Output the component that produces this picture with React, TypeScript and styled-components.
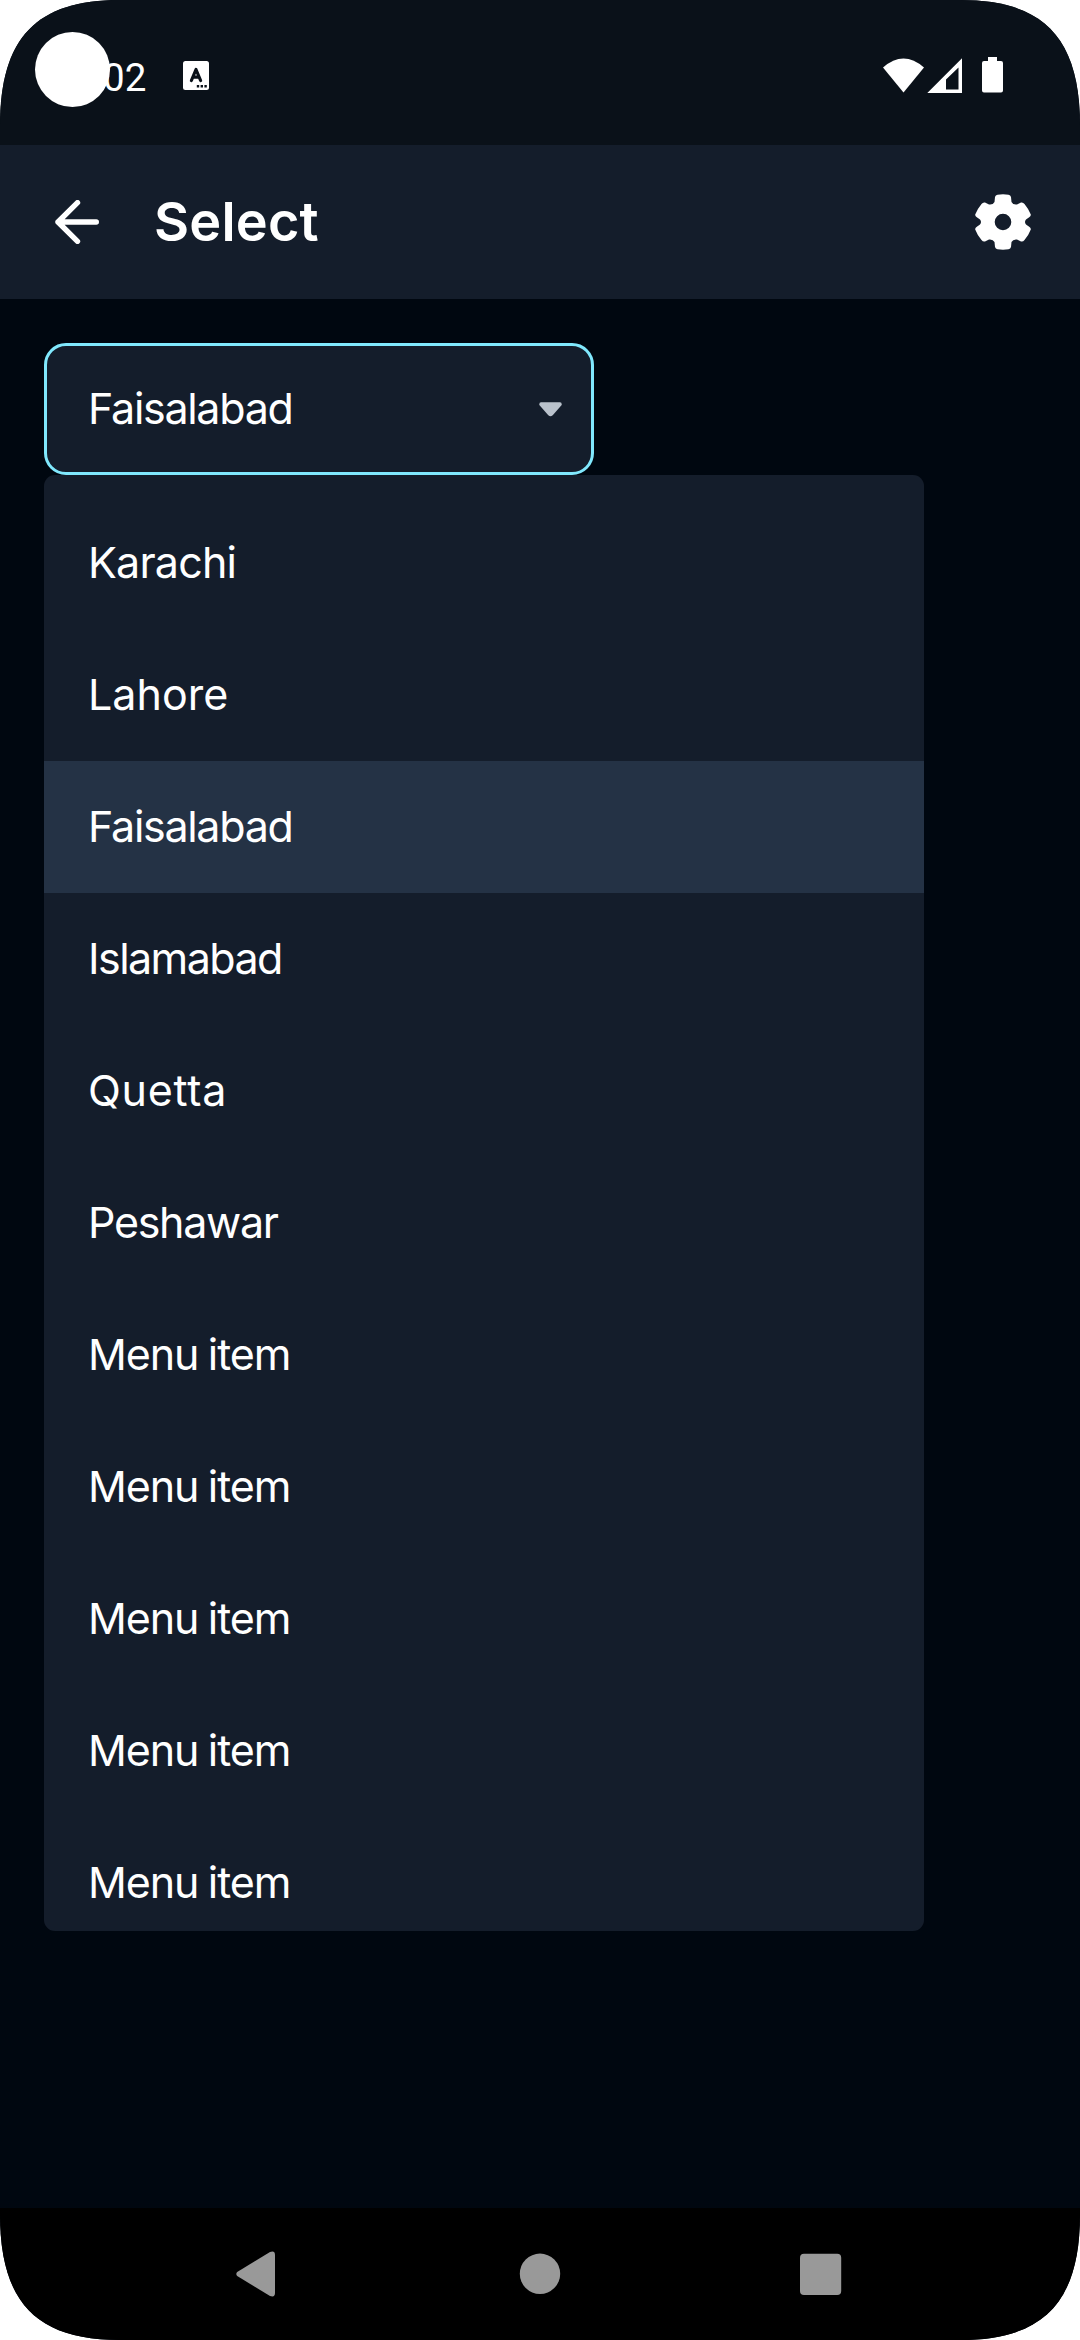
import React from "react";
import styled, { createGlobalStyle } from "styled-components";

const GlobalStyle = createGlobalStyle`
  html, body { margin: 0; padding: 0; background: #fff; }
  * { box-sizing: border-box; }
`;

const Screen = styled.div`
  position: relative;
  display: flex;
  flex-direction: column;
  width: 1080px;
  height: 2340px;
  overflow: hidden;
  background: #000710;
  color: #fff;
  font-family: Inter, "Liberation Sans", sans-serif;
  clip-path: path("M0 126 C0 37 37 0 120 0 H960 C1043 0 1080 37 1080 126 V2214 C1080 2303 1043 2340 960 2340 H120 C37 2340 0 2303 0 2214 Z");
`;

const StatusBar = styled.header`
  display: flex;
  justify-content: space-between;
  height: 145px;
  padding: 55px 76px 0 103px;
  background: #0a1119;
`;

const StatusGroup = styled.div`
  display: flex;
  align-items: flex-start;
`;

const Clock = styled.span`
  width: 80px;
  font-family: Roboto, sans-serif;
  font-size: 38.5px;
  line-height: 46px;
`;

const KeyboardBadge = styled.svg`
  margin-top: 6px;
`;

const SystemIcons = styled.svg`
  margin-top: 2px;
`;

const CameraHole = styled.div`
  position: absolute;
  left: 35px;
  top: 32px;
  width: 75px;
  height: 75px;
  border-radius: 50%;
  background: #fff;
`;

const AppBar = styled.div`
  display: flex;
  align-items: center;
  height: 154px;
  padding: 0 49px 0 55px;
  background: #141d2b;
`;

const Title = styled.h1`
  flex: 1;
  margin: 0 0 0 55px;
  font-size: 54px;
  line-height: 64px;
  font-weight: 600;
  letter-spacing: 0.2px;
`;

const Content = styled.main`
  flex: 1;
  padding: 44px;
`;

const SelectField = styled.div`
  display: flex;
  align-items: center;
  justify-content: space-between;
  width: 550px;
  height: 132px;
  padding: 0 29px 0 41px;
  border: 3px solid #80e8fd;
  border-radius: 22px;
  background: #141d2b;
`;

const Label = styled.span<{ $spacing: number }>`
  padding-bottom: 2px;
  font-size: 43px;
  line-height: 52px;
  letter-spacing: ${(p) => p.$spacing}px;
  word-spacing: -1.5px;
  white-space: nowrap;
`;

const Menu = styled.ul`
  width: 880px;
  height: 1456px;
  margin: 0;
  padding: 22px 0 0;
  list-style: none;
  overflow: hidden;
  border-radius: 11px;
  background: #141d2b;
`;

const MenuItem = styled.li<{ $selected: boolean }>`
  display: flex;
  align-items: center;
  height: 132px;
  padding: 0 44px;
  background: ${(p) => (p.$selected ? "#243245" : "transparent")};
`;

const NavBar = styled.nav`
  display: flex;
  align-items: center;
  justify-content: space-between;
  height: 132px;
  padding: 0 238px 0 236px;
  background: #000;
`;

const HomeIcon = styled.svg`
  margin-left: 5px;
`;

const cities: [string, number][] = [
  ["Karachi", -0.8],
  ["Lahore", 0],
  ["Faisalabad", -1.3],
  ["Islamabad", -1.55],
  ["Quetta", 0.7],
  ["Peshawar", -1.3],
  ["Menu item", -1.1],
  ["Menu item", -1.1],
  ["Menu item", -1.1],
  ["Menu item", -1.1],
  ["Menu item", -1.1],
];

export default function App() {
  return (
    <>
      <GlobalStyle />
      <Screen>
        <StatusBar>
          <StatusGroup>
            <Clock>02</Clock>
            <KeyboardBadge width="26" height="30" viewBox="0 0 26 30">
              <rect width="26" height="29" rx="2.5" fill="#fff" />
              <path d="M8.4 19.5 L13 8.5 L17.6 19.5 M10 16.2 H16" fill="none" stroke="#0a1119" strokeWidth="3.2" strokeLinecap="round" strokeLinejoin="round" />
              <path d="M13.8 24h2.4v2.4h-2.4zM17.6 24h2.4v2.4h-2.4zM21.4 24h2.4v2.4h-2.4z" fill="#0a1119" />
            </KeyboardBadge>
          </StatusGroup>
          <SystemIcons width="121" height="37" viewBox="883 57 121 37" fill="#fff">
            <path d="M883 67.5 Q903.5 49.5 924 67.5 L903.5 92.5 Z" />
            <path fillRule="evenodd" d="M927.3 93 L962 58.3 V93 Z M946 89.5 H958.5 V67.5 L946 79.5 Z" />
            <path d="M988 57 h9 v4 h4 q2 0 2 2 v27.500 q0 2-2 2 h-17 q-2 0-2-2 v-27.500 q0-2 2-2 h4z" />
          </SystemIcons>
        </StatusBar>
        <AppBar>
          <svg width="44" height="44" viewBox="0 0 44 44" fill="none" stroke="#fff" strokeWidth="5.4" strokeLinecap="round" strokeLinejoin="round">
            <path d="M22.500 2.700 L3 22 L22.500 41.300 M3 22 H41.300" />
          </svg>
          <Title>Select</Title>
          <svg width="56" height="56" viewBox="-28 -28 56 56" fill="#fff">
            <path fillRule="evenodd" d="M-8 -25 Q-7.500 -27 -5.500 -27.300 Q0 -28.200 5.500 -27.300 Q7.500 -27 8 -25 L8.500 -20 Q10 -17 14 -17.500 L18 -19.500 Q20 -20 21.500 -18 Q26 -12.500 27.800 -7.500 Q28 -6 26.500 -5 L23 -2.500 Q21 0 23 2.500 L26.500 5 Q28 6 27.800 7.500 Q26 12.500 21.500 18 Q20 20 18 19.500 L14 17.500 Q10 17 8.500 20 L8 25 Q7.500 27 5.500 27.300 Q0 28.200 -5.500 27.300 Q-7.500 27 -8 25 L-8.500 20 Q-10 17 -14 17.500 L-18 19.500 Q-20 20 -21.500 18 Q-26 12.500 -27.800 7.500 Q-28 6 -26.500 5 L-23 2.500 Q-21 0 -23 -2.500 L-26.500 -5 Q-28 -6 -27.800 -7.500 Q-26 -12.500 -21.500 -18 Q-20 -20 -18 -19.500 L-14 -17.500 Q-10 -17 -8.500 -20 Z M0 -8.300 A8.300 8.300 0 1 0 0 8.300 A8.300 8.300 0 1 0 0 -8.300Z" />
          </svg>
        </AppBar>
        <Content>
          <SelectField>
            <Label $spacing={-1.3}>Faisalabad</Label>
            <svg width="23" height="15" viewBox="0 0 23 15" fill="#bac2cc">
              <path d="M2 0.300 H21 Q23 0.500 22.700 3 L13.700 13.200 Q11.500 15.500 9.300 13.200 L0.300 3 Q0 0.500 2 0.300Z" />
            </svg>
          </SelectField>
          <Menu>
            {cities.map(([name, spacing], i) => (
              <MenuItem key={i} $selected={i === 2}>
                <Label $spacing={spacing}>{name}</Label>
              </MenuItem>
            ))}
          </Menu>
        </Content>
        <NavBar>
          <svg width="39" height="46" viewBox="0 0 39 46" fill="#999">
            <path d="M1.200 21 L34 1 Q39 -0.800 39 4 V42 Q39 46.800 34 45 L1.200 25 Q-0.600 23 1.200 21Z" />
          </svg>
          <HomeIcon width="42" height="48" viewBox="0 0 42 48" fill="#999"><circle cx="21" cy="23.800" r="20.200" /></HomeIcon>
          <svg width="42" height="42" viewBox="0 0 42 42" fill="#999"><rect y="0.800" width="41.200" height="41.200" rx="4" /></svg>
        </NavBar>
        <CameraHole />
      </Screen>
    </>
  );
}
